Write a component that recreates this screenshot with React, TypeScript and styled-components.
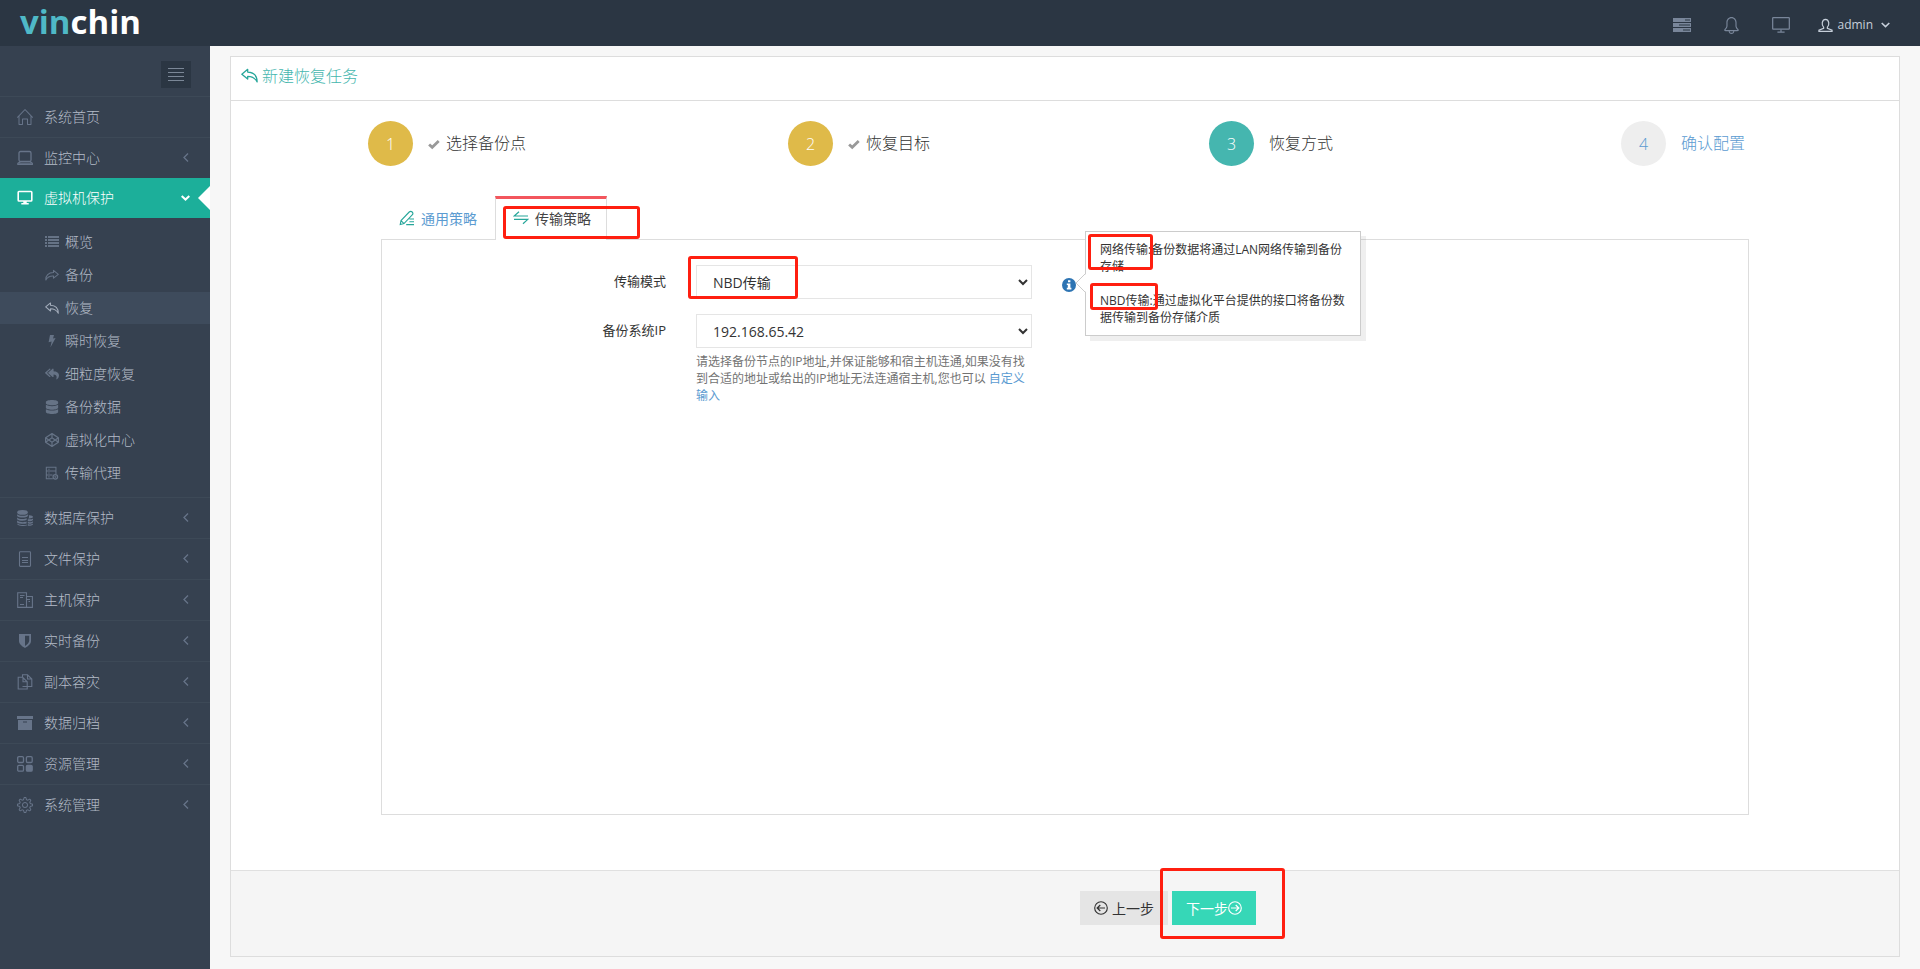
import React from 'react';
import styled, { createGlobalStyle, css } from 'styled-components';
import { FaReplyAll, FaDatabase, FaCodepen } from 'react-icons/fa';
import { SlHome, SlBell, SlSettings } from 'react-icons/sl';

const GlobalStyle = createGlobalStyle`
  *, *::before, *::after { box-sizing: border-box; }
  body {
    margin: 0;
    background: #f7f7f7;
    color: #333;
    font-family: 'Open Sans', 'Noto Sans CJK SC', sans-serif;
    font-size: 14px;
    line-height: 20px;
  }
  a { color: #5b9bd1; text-decoration: none; }
  button, select { font-family: inherit; }
  ul, ol { list-style: none; margin: 0; padding: 0; }
`;

/* ---------- icons ---------- */

type IconProps = { size?: number };

const Svg = ({ size = 16, children }: IconProps & { children: React.ReactNode }) => (
  <svg width={size} height={size} viewBox="0 0 16 16" fill="none" stroke="currentColor" strokeWidth="1.1" aria-hidden="true">
    {children}
  </svg>
);

const ReplyIcon = ({ size }: IconProps) => (
  <Svg size={size}>
    <path d="M6.3 2.2 L.8 6.8 L6.3 11.4 V8.9 C10.5 8.9 13 10.2 15.2 14 C15.2 8.5 12 5 6.3 4.8 Z" strokeWidth="1.2" strokeLinejoin="round" />
  </Svg>
);
const ForwardIcon = ({ size }: IconProps) => (
  <Svg size={size}>
    <path d="M9.7 2.7 L15.2 7.2 L9.7 11.6 V9.2 C5.5 9 3 9.8 1 13.8 C.6 8.5 4 5.2 9.7 5.1 Z" strokeWidth="1.2" strokeLinejoin="round" />
  </Svg>
);
const LaptopIcon = () => (
  <Svg>
    <rect x="2" y="1.5" width="12" height="10" rx="1.5" strokeWidth="1.3" />
    <path d="M3.5 11.5 L.8 13.2 V14.5 H15.4 V13.2 L13 11.5 M1 13.2 H15.2" />
  </Svg>
);
const DesktopIcon = () => (
  <Svg>
    <rect x="1.2" y="1.5" width="13.6" height="9.5" rx=".8" strokeWidth="1.6" />
    <path d="M6.3 11 H9.7 V13 H11.7 V14.6 H4.3 V13 H6.3 Z" fill="currentColor" stroke="none" />
  </Svg>
);
const ScreenIcon = () => (
  <Svg size={18}>
    <rect x=".6" y="1.4" width="14.8" height="10.3" rx=".6" />
    <path d="M8 12 V14 M4.8 14.3 H11.2" />
  </Svg>
);
const ServerIcon = () => (
  <svg width="18" height="14" viewBox="0 0 18 14" fill="currentColor" aria-hidden="true">
    <path fillRule="evenodd" d="M0 0h18v4H0zM12 1.5v1h5v-1zM0 5h18v4H0zM6 6.5v1h11v-1zM0 10h18v4H0zM10 11.5v1h7v-1z" />
  </svg>
);
const UserIcon = () => (
  <Svg size={15}>
    <path d="M6 9.8 C3.6 7.8 3.9 1.6 8 1.4 C12.1 1.6 12.4 7.8 10 9.8 V11 L15 13 V14.3 H1 V13 L6 11 Z" strokeWidth="1.3" />
  </Svg>
);
const ListIcon = () => (
  <svg width="14" height="12" viewBox="0 0 14 12" fill="currentColor" aria-hidden="true">
    <path d="M0 0h2v2H0zM3 0h11v2H3zM0 3h2v2H0zM3 3h11v2H3zM0 6h2v2H0zM3 6h11v2H3zM0 9h2v2H0zM3 9h11v2H3z" />
  </svg>
);
const BoltIcon = () => (
  <svg width="14" height="14" viewBox="0 0 14 14" fill="currentColor" aria-hidden="true">
    <path d="M5 1 H9 L8 4.6 L10.6 4 L5.4 13.4 L6.6 7.4 L3.6 8.2 Z" />
  </svg>
);
const AgentIcon = () => (
  <Svg size={14}>
    <path d="M9 14.5 H1.5 V1.5 H12.5 V9 M1.5 5.8 H12.5 M1.5 10.2 H8.5 M3.8 3.7 H5.2 M3.8 8 H5.2 M3.8 12.4 H5.2" strokeWidth="1.2" />
    <circle cx="11.8" cy="12.4" r="2.6" strokeWidth="1.4" />
    <circle cx="11.8" cy="12.4" r=".7" />
  </Svg>
);
const CoinsIcon = () => (
  <svg width="16" height="16" viewBox="0 0 16 16" fill="currentColor" aria-hidden="true">
    <ellipse cx="5.5" cy="2.4" rx="5.3" ry="2.3" />
    <path d="M.1 4.2 C2 6.2 9 6.2 10.9 4.2 V6 C9 8 2 8 .1 6 Z M.1 7.4 C2 9.4 8 9.3 9.6 8 V10 C7 11.2 2 11 .1 9.2 Z M.1 10.6 C2 12.6 8 12.6 9.6 11.6 V13.4 C7 14.2 2 14 .1 12.4 Z M.4 13.6 C2.5 15.4 8 15.4 9.8 14.6 V15.6 C7 16.3 1.5 16.2 .4 14.6 Z" />
    <path d="M11.8 5.4 C14 5.2 16 6 16 7 S14 8.6 11.2 8.4 C12.4 7.4 12 6.4 11.8 5.4 Z M10.8 9.2 C13 9.6 15 9.2 16 8.4 V10 C15 11.2 13 11.6 10.8 11.2 Z M10.8 12 C13 12.4 15 12 16 11.2 V12.4 C15 13.6 13 13.9 10.8 13.6 Z M10.8 14.3 C13 14.6 15 14.2 16 13.4 V14.6 C15 15.6 13 16 10.8 15.8 Z" />
  </svg>
);
const FileIcon = () => (
  <Svg>
    <rect x="2.5" y=".8" width="11" height="14.6" rx=".8" />
    <path d="M5 6.5 H11 M5 9.5 H11 M5 11.5 H11" />
  </Svg>
);
const HostIcon = () => (
  <Svg>
    <path d="M9.5 15.4 H.7 V.7 H9.5 Z M9.5 4.5 H15.4 V15.4 H9.5 M3 3.5 H7.5 M3 5.5 H6 M3 12.5 H7 M9.5 7.5 H13 M11.5 9.5 H13" />
  </Svg>
);
const ShieldIcon = () => (
  <svg width="16" height="16" viewBox="0 0 16 16" fill="currentColor" aria-hidden="true">
    <path fillRule="evenodd" d="M2 1 H14 V8 C14 11 11 13.4 8 15 C5 13.4 2 11 2 8 Z M8 2.8 V12.9 C10.4 11.4 12.2 9.6 12.2 7.8 V2.8 Z" />
  </svg>
);
const CopyIcon = () => (
  <Svg>
    <path d="M5.5 3.2 H1.2 V15 H10.2 V12.5 M5.5 12.5 H10.2 M5.5 3.2 V.8 H10.5 L14.8 5 V12.5 H10.2 V7.8 L5.5 3.2 Z M10.5 .8 V5 H14.8 M6 3.2 V7.8 H10.2" />
  </Svg>
);
const ArchiveBoxIcon = () => (
  <svg width="16" height="16" viewBox="0 0 16 16" fill="currentColor" aria-hidden="true">
    <path fillRule="evenodd" d="M0 1 H16 V4 H0 Z M1 5 H15 V15 H1 Z M6 6.5 V7.5 H10 V6.5 Z" />
  </svg>
);
const BlocksIcon = () => (
  <Svg>
    <rect x=".7" y=".7" width="5.8" height="5.8" rx="1.2" strokeWidth="1.3" />
    <rect x="9.4" y=".7" width="5.8" height="5.8" rx="1.2" strokeWidth="1.3" />
    <rect x=".7" y="9.4" width="5.8" height="5.8" rx="1.2" strokeWidth="1.3" />
    <rect x="9.4" y="9.4" width="5.8" height="5.8" rx="1.2" strokeWidth="1.3" fill="currentColor" />
  </Svg>
);
const PencilIcon = () => (
  <Svg>
    <path d="M1.2 14.6 L2 10.6 L10.2 2 Q11.8 .6 13.2 2 Q14.6 3.4 13.2 4.9 L5 13.6 Z M2 10.6 L5 13.6 M10.4 9 H15 M10.4 11.8 H15 M7.2 14.6 H15" />
  </Svg>
);
const SwapIcon = () => (
  <Svg>
    <path d="M15 6 H1.2 L6 1.8 M1 9.4 H14.8 L10 13.8" strokeWidth="1.2" />
  </Svg>
);
const CheckIcon = () => (
  <svg width="12" height="11" viewBox="0 0 13 11" fill="none" stroke="currentColor" strokeWidth="3" aria-hidden="true">
    <path d="M1.2 5.4 L4.6 8.6 L11.6 1.8" />
  </svg>
);
const CircleArrow = ({ flip = false }: { flip?: boolean }) => (
  <Svg size={14}>
    <circle cx="8" cy="8" r="7.2" strokeWidth="1.3" />
    <path d={flip ? 'M3.4 8 H12.4 M8.8 4.6 L12.4 8 L8.8 11.4' : 'M12.6 8 H3.6 M7.2 4.6 L3.6 8 L7.2 11.4'} strokeWidth="1.4" />
  </Svg>
);
const AngleLeft = () => (
  <svg width="6" height="9" viewBox="0 0 6 9" fill="none" stroke="currentColor" strokeWidth="1.3" aria-hidden="true">
    <path d="M5 .5 L1 4.5 L5 8.5" />
  </svg>
);
const AngleDown = ({ bold = false }: { bold?: boolean }) => (
  <svg width="9" height="6" viewBox="0 0 9 6" fill="none" stroke="currentColor" strokeWidth={bold ? 2 : 1.6} aria-hidden="true">
    <path d="M.7 1 L4.5 4.6 L8.3 1" />
  </svg>
);
const InfoIcon = () => (
  <svg width="14" height="14" viewBox="0 0 14 14" aria-hidden="true">
    <circle cx="7" cy="7" r="7" fill="#2d74b3" />
    <path d="M6 2.2h2.4v2H6zM4.8 5.4h3.6v4.4h1v1.6H4.8V9.8h1V7h-1z" fill="#fff" />
  </svg>
);

/* ---------- shell ---------- */

const Page = styled.div`
  min-height: 100vh;
  display: flex;
  flex-direction: column;
`;
const TopBar = styled.header`
  height: 46px;
  background: #2b3643;
  display: flex;
  align-items: center;
  justify-content: space-between;
  padding: 0 30px 0 20px;
`;
const Logo = styled.a`
  font-size: 33px;
  line-height: 40px;
  padding-bottom: 2px;
  font-weight: 700;
  color: #fff;
  span { color: #4fb9c7; }
`;
const Tools = styled.nav`
  display: flex;
  align-items: center;
  gap: 32px;
  padding-top: 4px;
`;
const ToolButton = styled.button`
  border: 0;
  padding: 0;
  background: none;
  color: #79869a;
  display: flex;
  align-items: center;
`;
const UserButton = styled(ToolButton)`
  gap: 4px;
  color: #c6cfda;
  font-size: 12px;
  line-height: 16px;
  margin-left: -4px;
  svg:last-child { margin-left: 4px; }
`;
const Body = styled.div`
  flex: 1;
  display: flex;
`;

/* ---------- sidebar ---------- */

const Sidebar = styled.aside`
  width: 210px;
  flex: none;
  background: #364150;
`;
const TogglerRow = styled.div`
  height: 50px;
  padding: 15px 19px 0 0;
  display: flex;
  justify-content: flex-end;
`;
const Toggler = styled.button`
  width: 30px;
  height: 27px;
  border: 0;
  padding: 7px;
  background: #2b3643;
  display: flex;
  flex-direction: column;
  gap: 3px;
  i { height: 1px; background: #7b8797; }
`;
const NavItem = styled.li<{ $active?: boolean }>`
  border-top: 1px solid ${p => (p.$active ? '#1caf9a' : '#3d4957')};
`;
const NavLink = styled.a<{ $active?: boolean }>`
  height: 40px;
  padding: 0 21px 1px 17px;
  display: flex;
  align-items: center;
  position: relative;
  font-weight: 300;
  color: #b4bcc8;
  > svg { color: #677489; flex: none; }
  > span { flex: 1; padding-left: 11px; }
  ${p => p.$active && css`
    height: 39px;
    background: #1caf9a;
    color: #fff;
    padding-right: 20px;
    > svg { color: #fff; }
    &::after {
      content: '';
      position: absolute;
      right: 0;
      top: 7px;
      border: solid transparent;
      border-width: 12px 12px 12px 0;
      border-right-color: #fff;
    }
  `}
`;
const SubMenu = styled.ul`
  padding: 8px 0;
  display: grid;
  gap: 1px;
`;
const SubLink = styled.a<{ $active?: boolean }>`
  height: 32px;
  padding: 0 0 1px 45px;
  display: flex;
  align-items: center;
  gap: 6px;
  font-weight: 300;
  color: #b4bcc8;
  background: ${p => (p.$active ? '#3e4b5c' : 'transparent')};
  svg { color: ${p => (p.$active ? '#a3adbb' : '#667386')}; flex: none; }
`;

/* ---------- wizard panel ---------- */

const Main = styled.main`
  flex: 1;
  min-width: 0;
  padding: 10px 20px 12px;
  display: flex;
  flex-direction: column;
`;
const Panel = styled.section`
  flex: 1;
  display: flex;
  flex-direction: column;
  background: #fff;
  border: 1px solid #ddd;
`;
const PanelTitle = styled.h1`
  margin: 0;
  height: 44px;
  padding: 0 10px 6px;
  border-bottom: 1px solid #ddd;
  display: flex;
  align-items: center;
  gap: 4px;
  font-size: 16px;
  font-weight: 300;
  color: #44b6ae;
  svg { color: #26a69a; }
`;
const Steps = styled.ol`
  display: grid;
  grid-template-columns: repeat(4, 1fr);
  padding: 20px 10px 30px;
`;
const Step = styled.li<{ $state: 'done' | 'current' | 'todo' }>`
  display: flex;
  align-items: center;
  justify-content: center;
  gap: 15px;
  font-size: 16px;
  font-weight: 300;
  color: ${p => (p.$state === 'todo' ? '#5b9bd1' : '#333')};
`;
const StepNumber = styled.span<{ $state: 'done' | 'current' | 'todo' }>`
  width: 45px;
  height: 45px;
  border-radius: 50%;
  display: grid;
  place-items: center;
  color: ${p => (p.$state === 'todo' ? '#5b9bd1' : '#fff')};
  background: ${p => ({ done: '#dfba49', current: '#45b6af', todo: '#eee' })[p.$state]};
`;
const StepLabel = styled.span`
  display: flex;
  align-items: center;
  gap: 6px;
  padding-bottom: 2px;
  svg { color: #999; margin-top: 3px; }
`;
const TabArea = styled.div`
  flex: 1;
  margin: 0 150px 55px;
  display: flex;
  flex-direction: column;
`;
const TabList = styled.div`
  display: flex;
  gap: 2px;
`;
const Tab = styled.button<{ $active?: boolean }>`
  height: 44px;
  margin-bottom: -1px;
  padding: 0 15px 3px 17px;
  position: relative;
  display: flex;
  align-items: center;
  gap: 6px;
  border: 1px solid transparent;
  border-width: 3px 1px 0;
  background: transparent;
  font-size: 14px;
  color: #5b9bd1;
  svg { color: #26a69a; }
  ${p => p.$active && css`
    background: #fff;
    border-color: #f3565d #ddd transparent;
    color: #444;
  `}
`;
const TabPanel = styled.div`
  flex: 1;
  min-height: 560px;
  border: 1px solid #ddd;
  padding: 25px 0;
`;
const Form = styled.form`
  display: flex;
  flex-direction: column;
  gap: 15px;
`;
const Field = styled.div`
  display: grid;
  grid-template-columns: 284px 336px auto;
  justify-content: start;
  column-gap: 30px;
`;
const Label = styled.label`
  font-size: 13px;
  line-height: 32px;
  text-align: right;
`;
const Control = styled.div`
  position: relative;
`;
const Select = styled.select`
  display: block;
  width: 100%;
  height: 34px;
  padding: 0 12px;
  border: 1px solid #e5e5e5;
  border-radius: 0;
  background: #fff;
  color: #333;
  font-size: 14px;
`;
const Help = styled.p`
  margin: 5px 0 0;
  font-size: 12px;
  line-height: 17px;
  color: #737373;
`;
const InfoAnchor = styled.div`
  position: relative;
  width: 14px;
  height: 14px;
  margin-top: 13px;
`;
const InfoButton = styled.button`
  display: block;
  border: 0;
  padding: 0;
  background: none;
  svg { display: block; }
`;
const Popover = styled.div`
  position: absolute;
  left: 23px;
  top: -47px;
  width: 276px;
  padding: 9px 14px;
  background: #fff;
  border: 1px solid #ccc;
  box-shadow: 5px 5px rgba(102, 102, 102, 0.1);
  font-size: 12px;
  line-height: 17px;
  p { margin: 0 0 17px; }
  p:last-of-type { margin: 0; }
`;
const PopoverArrow = styled.svg`
  position: absolute;
  left: -11px;
  top: 40px;
`;
const Footer = styled.footer`
  border-top: 1px solid #e0e0e0;
  background: #f5f5f5;
  padding: 20px 0 31px calc(50% + 15px);
  display: flex;
  gap: 4px;
`;
const Button = styled.button<{ $primary?: boolean }>`
  height: 34px;
  padding: 0 14px;
  border: 0;
  display: flex;
  align-items: center;
  gap: ${p => (p.$primary ? 0 : 4)}px;
  font-size: 14px;
  white-space: nowrap;
  color: ${p => (p.$primary ? '#fff' : '#333')};
  background: ${p => (p.$primary ? '#36d7b7' : '#e5e5e5')};
`;
const Anchor = styled.div`
  position: relative;
`;
/* Red highlight frame laid over the element that contains it. */
const Highlight = styled.span<{ $x: number; $y: number; $w: number; $h: number }>`
  position: absolute;
  left: ${p => p.$x}px;
  top: ${p => p.$y}px;
  width: ${p => p.$w}px;
  height: ${p => p.$h}px;
  border: 3px solid #ff1f10;
  border-radius: 3px;
  pointer-events: none;
  z-index: 1;
`;

const subItems = [
  { icon: <ListIcon />, text: '概览' },
  { icon: <ForwardIcon size={14} />, text: '备份' },
  { icon: <ReplyIcon size={14} />, text: '恢复', active: true },
  { icon: <BoltIcon />, text: '瞬时恢复' },
  { icon: <FaReplyAll size={14} />, text: '细粒度恢复' },
  { icon: <FaDatabase size={14} />, text: '备份数据' },
  { icon: <FaCodepen size={14} />, text: '虚拟化中心' },
  { icon: <AgentIcon />, text: '传输代理' },
];

const navItems = [
  { icon: <SlHome size={16} />, text: '系统首页', leaf: true },
  { icon: <LaptopIcon />, text: '监控中心' },
  { icon: <DesktopIcon />, text: '虚拟机保护', active: true },
  { icon: <CoinsIcon />, text: '数据库保护' },
  { icon: <FileIcon />, text: '文件保护' },
  { icon: <HostIcon />, text: '主机保护' },
  { icon: <ShieldIcon />, text: '实时备份' },
  { icon: <CopyIcon />, text: '副本容灾' },
  { icon: <ArchiveBoxIcon />, text: '数据归档' },
  { icon: <BlocksIcon />, text: '资源管理' },
  { icon: <SlSettings size={16} />, text: '系统管理' },
];

const steps = [
  { text: '选择备份点', state: 'done' },
  { text: '恢复目标', state: 'done' },
  { text: '恢复方式', state: 'current' },
  { text: '确认配置', state: 'todo' },
] as const;

export default function App() {
  return (
    <Page>
      <GlobalStyle />
      <TopBar>
        <Logo href="#"><span>vin</span>chin</Logo>
        <Tools>
          <ToolButton aria-label="任务"><ServerIcon /></ToolButton>
          <ToolButton aria-label="通知"><SlBell size={17} /></ToolButton>
          <ToolButton aria-label="屏幕"><ScreenIcon /></ToolButton>
          <UserButton><UserIcon />admin<AngleDown /></UserButton>
        </Tools>
      </TopBar>
      <Body>
        <Sidebar>
          <TogglerRow>
            <Toggler aria-label="菜单"><i /><i /><i /><i /></Toggler>
          </TogglerRow>
          <ul>
            {navItems.map(item => (
              <NavItem key={item.text} $active={item.active}>
                <NavLink href="#" $active={item.active}>
                  {item.icon}
                  <span>{item.text}</span>
                  {!item.leaf && (item.active ? <AngleDown bold /> : <AngleLeft />)}
                </NavLink>
                {item.active && (
                  <SubMenu>
                    {subItems.map(sub => (
                      <li key={sub.text}>
                        <SubLink href="#" $active={sub.active}>{sub.icon}{sub.text}</SubLink>
                      </li>
                    ))}
                  </SubMenu>
                )}
              </NavItem>
            ))}
          </ul>
        </Sidebar>
        <Main>
          <Panel>
            <PanelTitle><ReplyIcon size={17} />新建恢复任务</PanelTitle>
            <Steps>
              {steps.map((step, i) => (
                <Step key={step.text} $state={step.state}>
                  <StepNumber $state={step.state}>{i + 1}</StepNumber>
                  <StepLabel>{step.state === 'done' && <CheckIcon />}{step.text}</StepLabel>
                </Step>
              ))}
            </Steps>
            <TabArea>
              <TabList role="tablist">
                <Tab role="tab" aria-selected={false}><PencilIcon />通用策略</Tab>
                <Tab role="tab" aria-selected $active>
                  <SwapIcon />传输策略
                  <Highlight $x={7} $y={7} $w={137} $h={33} />
                </Tab>
              </TabList>
              <TabPanel role="tabpanel">
                <Form>
                  <Field>
                    <Label htmlFor="mode">传输模式</Label>
                    <Control>
                      <Select id="mode"><option>NBD传输</option></Select>
                      <Highlight $x={-8} $y={-9} $w={110} $h={43} />
                    </Control>
                    <InfoAnchor>
                      <InfoButton type="button" aria-label="说明"><InfoIcon /></InfoButton>
                      <Popover role="tooltip">
                        <PopoverArrow width="12" height="22" viewBox="0 0 12 22" aria-hidden="true">
                          <path d="M12 1 L1 11 L12 21 Z" fill="#fff" />
                          <path d="M11 1 L1 11 L11 21" fill="none" stroke="#ccc" />
                        </PopoverArrow>
                        <p>网络传输:备份数据将通过LAN网络传输到备份存储</p>
                        <p>NBD传输:通过虚拟化平台提供的接口将备份数据传输到备份存储介质</p>
                        <Highlight $x={2} $y={2} $w={65} $h={36} />
                        <Highlight $x={4} $y={51} $w={68} $h={27} />
                      </Popover>
                    </InfoAnchor>
                  </Field>
                  <Field>
                    <Label htmlFor="ip">备份系统IP</Label>
                    <Control>
                      <Select id="ip"><option>192.168.65.42</option></Select>
                      <Help>
                        请选择备份节点的IP地址,并保证能够和宿主机连通,如果没有找到合适的地址或给出的IP地址无法连通宿主机,您也可以 <a href="#">自定义输入</a>
                      </Help>
                    </Control>
                  </Field>
                </Form>
              </TabPanel>
            </TabArea>
            <Footer>
              <Button><CircleArrow />上一步</Button>
              <Anchor>
                <Button $primary>下一步<CircleArrow flip /></Button>
                <Highlight $x={-12} $y={-23} $w={125} $h={71} />
              </Anchor>
            </Footer>
          </Panel>
        </Main>
      </Body>
    </Page>
  );
}
